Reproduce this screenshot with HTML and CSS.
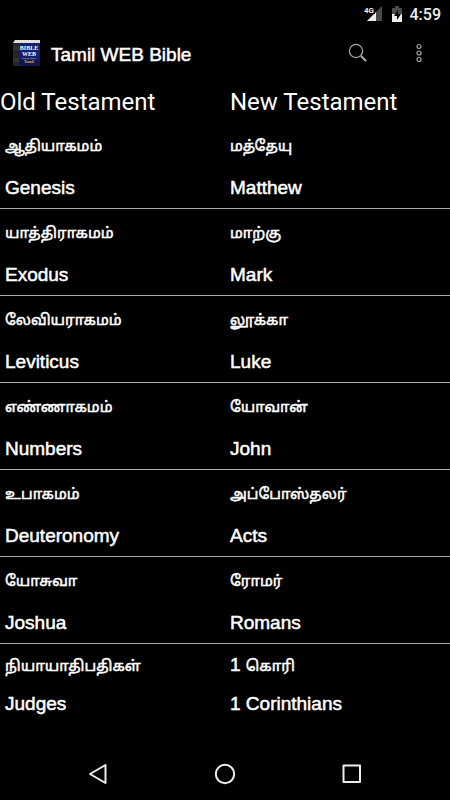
FILE: index.html
```html
<!DOCTYPE html>
<html lang="en">
<head>
<meta charset="utf-8">
<meta name="viewport" content="width=device-width, initial-scale=1">
<title>Tamil WEB Bible</title>
<link rel="stylesheet" href="styles.css">
</head>
<body>
<div class="status">
  <svg width="20" height="18" viewBox="0 0 20 18" role="img" aria-label="Signal">
    <path d="M19 1v15H4z" fill="#4a4a4a"/><path d="M13 7v9H4z" fill="#eee"/>
    <path d="M0 0h12v9H0z" fill="#000"/>
    <text x="1" y="8" class="network">4G</text>
  </svg>
  <svg class="battery" width="10" height="16" viewBox="0 0 10 16" role="img" aria-label="Battery charging">
    <path d="M0 2h3V0h4v2h3v6H0z" fill="#4a4a4a"/><path d="M0 8h10v8H0z" fill="#eee"/>
    <path d="M6 4L2 10h3v4l4-6H6z" fill="#000"/>
  </svg>
  <span class="time">4:59</span>
</div>
<header class="bar">
  <svg class="logo" width="28" height="30" viewBox="0 0 28 30" aria-hidden="true">
    <path d="M1 3L3 0h25v3z" fill="#e4dfd0"/><path d="M1 3h6v23H1z" fill="#25262a"/>
    <path d="M1 7h6M1 9h6M1 19h6M1 21h6" stroke="#3d3e42"/>
    <path d="M7 3h21v23H7z" fill="#17206f"/><path d="M7 20h21v6H7z" fill="#10174e"/>
    <text x="17" y="10" class="cover">BIBLE</text><text x="17" y="16" class="cover">WEB</text>
    <path d="M10 18.500h14" stroke="#8d8e9c" stroke-width=".6"/>
    <text x="17" y="23" class="cover-small">Tamil</text>
  </svg>
  <h1>Tamil WEB Bible</h1>
  <button class="search" aria-label="Search"><svg width="20" height="24" viewBox="0 0 20 24" fill="none" stroke="#aaa"><circle cx="8" cy="8" r="6.600" stroke-width="1.200"/><path d="M13 13l5 5" stroke-width="2.200"/></svg></button>
  <button class="more" aria-label="More options"><svg width="8" height="24" viewBox="0 0 8 24" fill="none" stroke="#aaa" stroke-width="1.200"><circle cx="4" cy="3.500" r="2"/><circle cx="4" cy="10" r="2"/><circle cx="4" cy="16.500" r="2"/></svg></button>
</header>
<main>
<table>
<thead><tr><th>Old Testament</th><th>New Testament</th></tr></thead>
<tbody>
<tr><td><a href="#genesis"><span lang="ta">ஆதியாகமம்</span><span>Genesis</span></a></td><td><a href="#matthew"><span lang="ta">மத்தேயு</span><span>Matthew</span></a></td></tr>
<tr><td><a href="#exodus"><span lang="ta">யாத்திராகமம்</span><span>Exodus</span></a></td><td><a href="#mark"><span lang="ta">மாற்கு</span><span>Mark</span></a></td></tr>
<tr><td><a href="#leviticus"><span lang="ta">லேவியராகமம்</span><span>Leviticus</span></a></td><td><a href="#luke"><span lang="ta">லூக்கா</span><span>Luke</span></a></td></tr>
<tr><td><a href="#numbers"><span lang="ta">எண்ணாகமம்</span><span>Numbers</span></a></td><td><a href="#john"><span lang="ta">யோவான்</span><span>John</span></a></td></tr>
<tr><td><a href="#deuteronomy"><span lang="ta">உபாகமம்</span><span>Deuteronomy</span></a></td><td><a href="#acts"><span lang="ta">அப்போஸ்தலர்</span><span>Acts</span></a></td></tr>
<tr><td><a href="#joshua"><span lang="ta">யோசுவா</span><span>Joshua</span></a></td><td><a href="#romans"><span lang="ta">ரோமர்</span><span>Romans</span></a></td></tr>
<tr class="compact"><td><a href="#judges"><span lang="ta">நியாயாதிபதிகள்</span><span>Judges</span></a></td><td><a href="#corinthians"><span lang="ta"><i class="number">1 </i>கொரி</span><span>1 Corinthians</span></a></td></tr>
</tbody>
</table>
</main>
<nav class="system">
  <button aria-label="Back"><svg width="22" height="22" viewBox="0 0 22 22"><path d="M18.500 2v18L3 11z"/></svg></button>
  <button aria-label="Home"><svg width="22" height="22" viewBox="0 0 22 22"><circle cx="11" cy="11" r="9.200"/></svg></button>
  <button aria-label="Overview"><svg width="22" height="22" viewBox="0 0 22 22"><path d="M2.500 2.500h16.500v16.500H2.500z"/></svg></button>
</nav>
</body>
</html>
```
FILE: styles.css
```css
* { box-sizing: border-box; }
body {
  margin: 0;
  min-height: 100vh;
  display: flex;
  flex-direction: column;
  background: #000;
  color: #fff;
  font-family: "Liberation Sans", "Noto Sans Tamil", sans-serif;
}
button { background: none; border: 0; padding: 0; display: flex; cursor: pointer; }
svg { display: block; }
.status {
  height: 28px;
  padding-right: 9px;
  display: flex;
  align-items: center;
  justify-content: flex-end;
}
.network { font: bold 8px Roboto, sans-serif; fill: #eee; }
.battery { margin: 0 8px 0 9px; }
.time { font: 500 16px Roboto, sans-serif; color: #eee; }
.bar {
  height: 54px;
  padding: 0 27px 0 12px;
  display: flex;
  align-items: center;
}
.logo { margin-right: 11px; }
.cover { font: bold 6px "Liberation Serif", serif; fill: #fff; text-anchor: middle; }
.cover-small { font: bold 4px "Liberation Serif", serif; fill: #e0a050; text-anchor: middle; }
h1 {
  margin: 0;
  flex: 1;
  font-size: 19px;
  font-weight: 400;
  -webkit-text-stroke: 0.5px;
}
.search { margin-right: 47px; }
main { flex: 1; }
table {
  width: 100%;
  table-layout: fixed;
  border-collapse: collapse;
}
th {
  height: 40px;
  padding: 0;
  text-align: left;
  font: 400 24px/40px Roboto, sans-serif;
}
th + th { padding-left: 5px; }
td { padding: 2px 0 0 5px; }
tbody tr { border-bottom: 1px solid #aaa; }
td a { display: block; color: inherit; text-decoration: none; }
td span {
  display: block;
  height: 42px;
  font-size: 19px;
  line-height: 44px;
  white-space: nowrap;
  -webkit-text-stroke: 0.5px;
}
td span[lang="ta"] { font-size: 15px; }
.number { font-size: 19px; font-style: normal; line-height: 1; }
.compact { border-bottom: 0; }
.compact span { height: 38px; line-height: 40px; }
.system {
  height: 52px;
  padding: 0 87px;
  display: flex;
  align-items: center;
  justify-content: space-between;
}
.system svg { fill: none; stroke: #eee; stroke-width: 2; stroke-linejoin: round; }
```
